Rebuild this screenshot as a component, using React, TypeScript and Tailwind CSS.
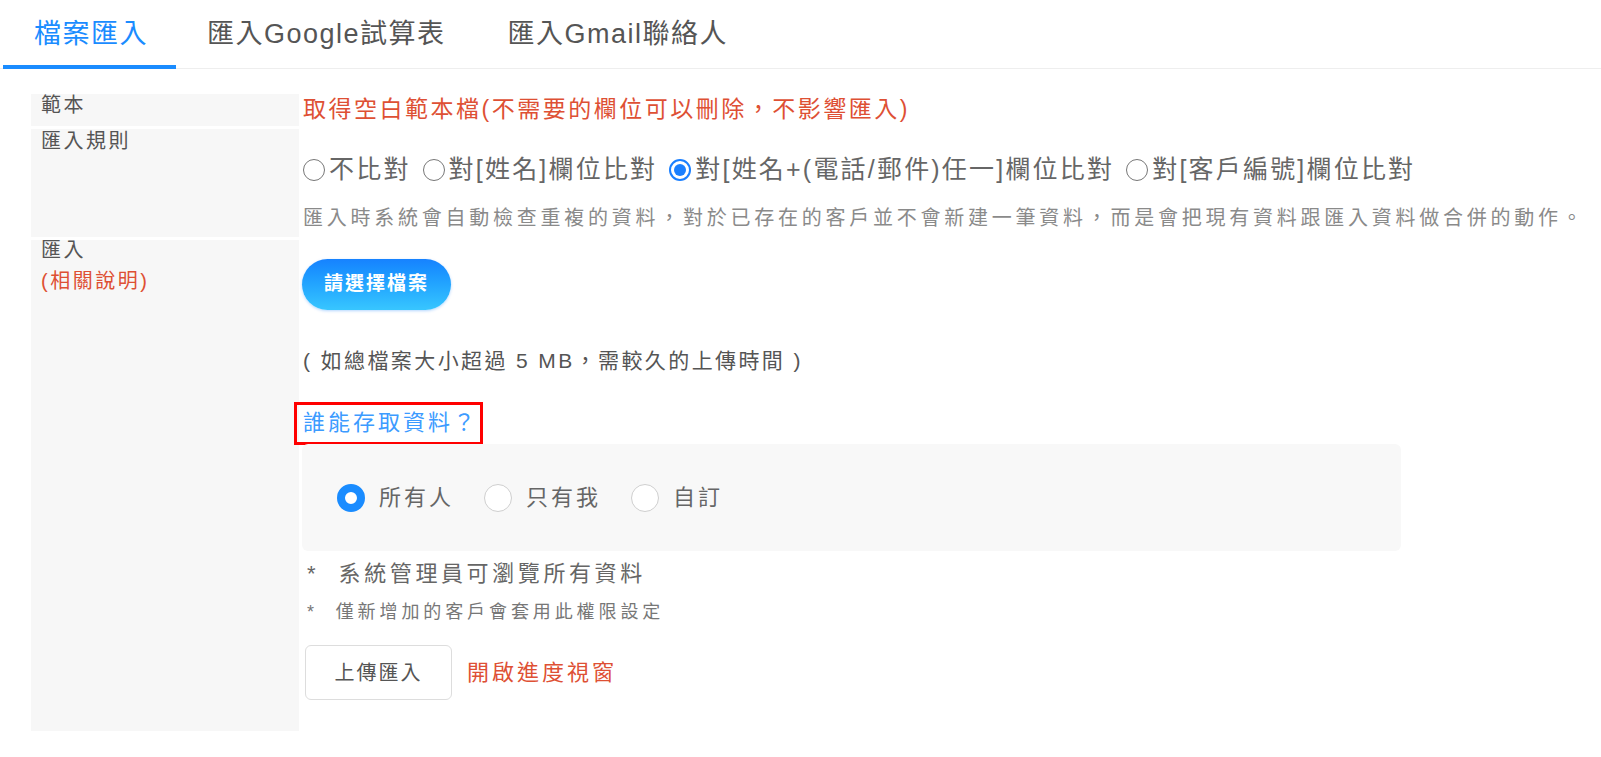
import React from 'react';

const tabs = ['檔案匯入', '匯入Google試算表', '匯入Gmail聯絡人'];

const rules = [
  { label: '不比對', checked: false },
  { label: '對[姓名]欄位比對', checked: false },
  { label: '對[姓名+(電話/郵件)任一]欄位比對', checked: true },
  { label: '對[客戶編號]欄位比對', checked: false },
];

const access = [
  { label: '所有人', checked: true },
  { label: '只有我', checked: false },
  { label: '自訂', checked: false },
];

const SmallRadio: React.FC<{ checked: boolean }> = ({ checked }) =>
  checked ? (
    <span className="inline-flex w-[22px] h-[22px] rounded-full border-[2px] border-[#1a7fff] items-center justify-center mr-[4px] shrink-0">
      <span className="w-[12px] h-[12px] rounded-full bg-[#1a7fff]" />
    </span>
  ) : (
    <span className="inline-block w-[22px] h-[22px] rounded-full border-[1.5px] border-[#777] mr-[4px] shrink-0" />
  );

const BigRadio: React.FC<{ checked: boolean }> = ({ checked }) =>
  checked ? (
    <span className="inline-block w-[28px] h-[28px] rounded-full border-[8px] border-[#1a8cff] bg-white shrink-0" />
  ) : (
    <span className="inline-block w-[28px] h-[28px] rounded-full border-[1.5px] border-[#cfcfcf] bg-white shrink-0" />
  );

export default function App() {
  return (
    <div className="w-[1601px] h-[757px] bg-white overflow-hidden font-['Liberation_Sans','Noto_Sans_CJK_TC',sans-serif]">
      <div className="flex border-b border-[#eeeeee] pl-[3px]">
        {tabs.map((t, i) => (
          <div
            key={t}
            className={`h-[69px] -mb-px flex items-center pl-[31px] pt-[4px] border-b-4 text-[27px] tracking-[1.5px] ${
              i === 0 ? 'border-[#1a8cff] text-[#1a8cff] pr-[28px]' : 'border-transparent text-[#555555] pr-[31px]'
            }`}
          >
            {t}
          </div>
        ))}
      </div>

      <div className="ml-[31px] mt-[25px] grid grid-cols-[268px_1fr] gap-y-[3px] w-[1570px]">
        {/* 範本 */}
        <div className="bg-[#f7f7f7] h-[32px] pl-[10px] text-[20px] leading-[22px] text-[#555555] tracking-[2.5px]">範本</div>
        <div className="pl-[4px] text-[23px] leading-[30px] tracking-[2.5px] text-[#de5034] whitespace-nowrap">
          取得空白範本檔(不需要的欄位可以刪除，不影響匯入)
        </div>

        {/* 匯入規則 */}
        <div className="bg-[#f7f7f7] pl-[10px] text-[20px] leading-[24px] text-[#555555] tracking-[2.5px]">匯入規則</div>
        <div className="pl-[4px] pt-[24px] pb-[4px]">
          <div className="flex items-center h-[34px] text-[25px] tracking-[2.2px] text-[#666666]">
            {rules.map((r) => (
              <span key={r.label} className="flex items-center mr-[12px] whitespace-nowrap">
                <SmallRadio checked={r.checked} />
                {r.label}
              </span>
            ))}
          </div>
          <div className="mt-[16px] text-[20px] leading-[30px] tracking-[3.75px] text-[#8a8a8a] whitespace-nowrap">
            匯入時系統會自動檢查重複的資料，對於已存在的客戶並不會新建一筆資料，而是會把現有資料跟匯入資料做合併的動作。
          </div>
        </div>

        {/* 匯入 */}
        <div className="bg-[#f7f7f7] pl-[10px] text-[20px] leading-[31px] tracking-[2.5px] text-[#555555]">
          <div className="-mt-[5px]">匯入</div>
          <div className="text-[#de5034]">(相關說明)</div>
        </div>
        <div className="pl-[4px] pb-[31px] flex flex-col items-start">
          <button className="mt-[19px] -ml-[1px] w-[149px] h-[51px] rounded-full bg-gradient-to-b from-[#1782ff] to-[#38c6ff] text-white font-bold text-[19px] tracking-[2px] shadow-[0_1px_3px_rgba(0,120,255,0.3)]">
            請選擇檔案
          </button>
          <div className="mt-[36px] text-[21px] leading-[30px] tracking-[2.4px] text-[#555555] whitespace-nowrap">
            ( 如總檔案大小超過 5 MB，需較久的上傳時間 )
          </div>
          <div className="mt-[26px] -ml-[9px] h-[43px] border-[3px] border-[#ff0000] pl-[6px] pr-[2px] pt-[3px] text-[22px] leading-[30px] tracking-[3px] text-[#3c9bff] whitespace-nowrap">
            誰能存取資料？
          </div>
          <div className="-mt-[1px] -ml-[1px] w-[1099px] h-[107px] bg-[#f8f8f8] rounded-[6px] flex items-center pl-[35px]">
            {access.map((a) => (
              <span key={a.label} className="flex items-center mr-[30px]">
                <BigRadio checked={a.checked} />
                <span className="ml-[14px] text-[22px] tracking-[3px] text-[#666666]">{a.label}</span>
              </span>
            ))}
          </div>
          <div className="mt-[8px] ml-[4px] text-[22px] leading-[30px] tracking-[3.6px] text-[#666666] whitespace-nowrap">
            *&nbsp; 系統管理員可瀏覽所有資料
          </div>
          <div className="mt-[10px] ml-[4px] text-[18px] leading-[26px] tracking-[3.9px] text-[#777777] whitespace-nowrap">
            *&nbsp; 僅新增加的客戶會套用此權限設定
          </div>
          <div className="mt-[20px] ml-[2px] flex items-center">
            <button className="w-[147px] h-[55px] bg-white border border-[#dddddd] rounded-[6px] text-[20px] tracking-[2px] text-[#555555]">
              上傳匯入
            </button>
            <span className="ml-[15px] text-[22px] tracking-[3px] text-[#de5034]">開啟進度視窗</span>
          </div>
        </div>
      </div>
    </div>
  );
}
